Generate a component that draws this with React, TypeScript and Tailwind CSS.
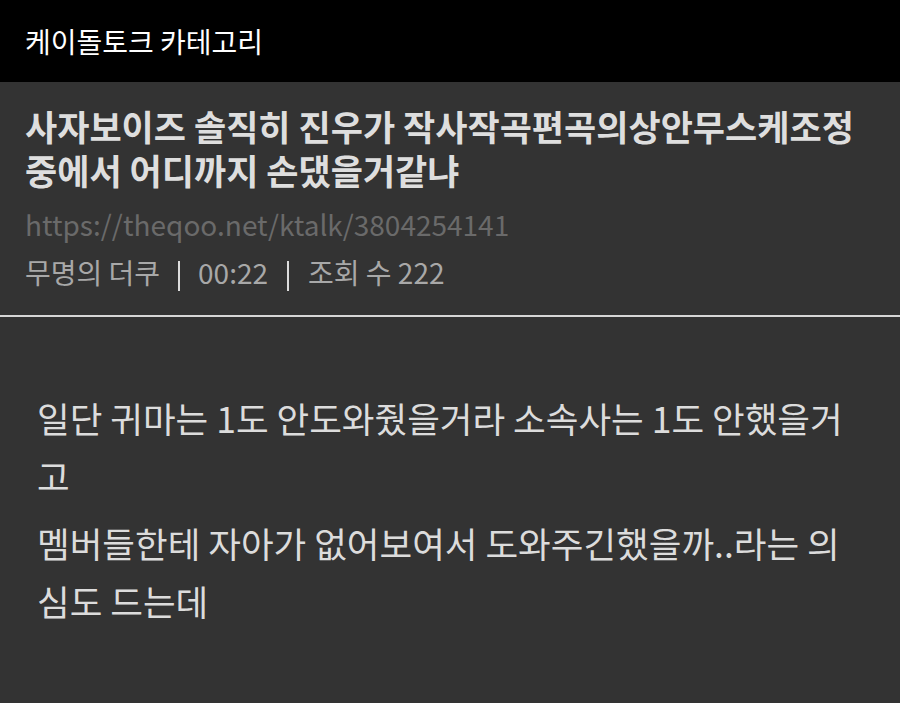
import React from 'react';

const FONT = { fontFamily: '"Noto Sans CJK KR", "Noto Sans", sans-serif' };

export default function App() {
  return (
    <div className="w-[900px] h-[703px] bg-[#333333] overflow-hidden" style={FONT}>
      {/* Top bar */}
      <div className="h-[82px] bg-black flex items-center px-[25px]">
        <span className="text-[28px] text-white leading-none">케이돌토크 카테고리</span>
      </div>

      {/* Post header */}
      <div className="bg-[#333333] px-[25px] pt-[22px] pb-[24px] border-b-2 border-[#d6d6d6]">
        <h1 className="max-w-[845px] text-[35px] font-bold leading-[44px] text-[#dedede]">
          사자보이즈 솔직히 진우가 작사작곡편곡의상안무스케조정 중에서 어디까지 손댔을거같냐
        </h1>
        <div className="mt-[13px] text-[28px] leading-[38px] text-[#6a6a6a]">
          https://theqoo.net/ktalk/3804254141
        </div>
        <div className="mt-[10px] text-[28px] leading-[38px] text-[#a8a8a8] flex items-center">
          <span>무명의 더쿠</span>
          <span className="mx-[18px] mt-[8px] inline-block w-[2px] h-[30px] bg-[#dcdcdc]" />
          <span>00:22</span>
          <span className="mx-[19px] mt-[8px] inline-block w-[2px] h-[30px] bg-[#dcdcdc]" />
          <span>조회 수 222</span>
        </div>
      </div>

      {/* Body */}
      <div className="pl-[37px] pr-[45px] pt-[72px] text-[35.5px] leading-[58px] text-[#dcdcdc]">
        <p>일단 귀마는 1도 안도와줬을거라 소속사는 1도 안했을거고</p>
        <p className="mt-[9px]">멤버들한테 자아가 없어보여서 도와주긴했을까..라는 의심도 드는데</p>
      </div>
    </div>
  );
}
